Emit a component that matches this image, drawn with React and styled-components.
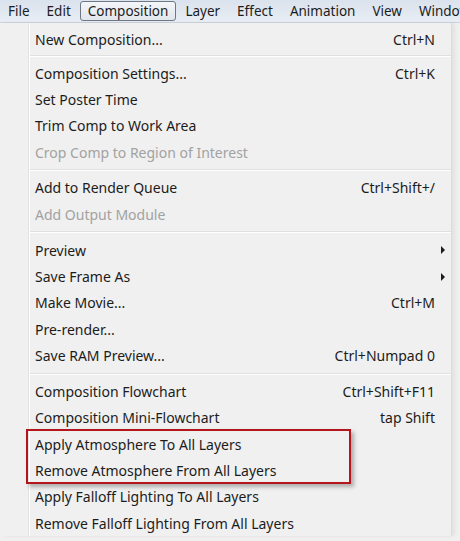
import React from "react";
import styled, { createGlobalStyle } from "styled-components";

const GlobalStyle = createGlobalStyle`
  html, body {
    margin: 0;
    padding: 0;
    background: #f0f0f0;
    overflow: hidden;
  }
  body {
    font-family: "Noto Sans", "Open Sans", sans-serif;
  }
`;

const Window = styled.div`
  width: 460px;
  height: 541px;
  overflow: hidden;
  background: #f0f0f0;
`;

const MenuBar = styled.div`
  height: 22px;
  display: flex;
  align-items: center;
  gap: 1px;
  padding-left: 0;
  background: linear-gradient(#dae2ed, #e9eef5);
  border-bottom: 1px solid #cdd3dc;
  white-space: nowrap;
  overflow: hidden;
`;

const BarItem = styled.div`
  height: 20px;
  display: flex;
  align-items: center;
  padding: 0 7px;
  font-size: 13.5px;
  color: #1c1c1c;
  box-sizing: border-box;
  border: 1px solid ${(p) => (p.$open ? "#6f7885" : "transparent")};
  border-radius: 3px;
  background: ${(p) =>
    p.$open ? "linear-gradient(#f3f5f8, #e2e6ec)" : "transparent"};
`;

const Panel = styled.div`
  width: 452px;
  padding-top: 3px;
  box-sizing: border-box;
  background: linear-gradient(
    to right,
    #f0f0f0 0,
    #f0f0f0 28px,
    #e2e3e3 28px,
    #e2e3e3 29px,
    #ffffff 29px,
    #ffffff 30px,
    #f0f0f0 30px
  );
  border-right: 1px solid #dcdcdc;
  box-shadow: 3px 0 4px rgba(0, 0, 0, 0.06);
`;

const Row = styled.div`
  height: 26.35px;
  display: grid;
  grid-template-columns: 1fr auto 16px;
  align-items: center;
  padding-left: 35px;
  font-size: 14px;
  color: ${(p) => (p.$disabled ? "#a2a2a2" : "#1c1c1c")};
  white-space: nowrap;
`;

const Shortcut = styled.span`
  text-align: right;
`;

const Arrow = styled.span`
  justify-self: center;
  width: 0;
  height: 0;
  border-top: 4px solid transparent;
  border-bottom: 4px solid transparent;
  border-left: 4px solid #1c1c1c;
`;

const Separator = styled.div`
  height: ${(p) => p.$h || 9.6}px;
  display: flex;
  align-items: center;
  padding-left: 30px;
  &::after {
    content: "";
    flex: 1;
    height: 1px;
    background: #e0e0e0;
    border-bottom: 1px solid #ffffff;
  }
`;

const Highlight = styled.div`
  position: relative;
  &::after {
    content: "";
    position: absolute;
    left: 26px;
    top: -2px;
    width: 325px;
    height: 55px;
    box-sizing: border-box;
    border: 2px solid #b5151c;
    box-shadow: 3px 3px 4px rgba(0, 0, 0, 0.28);
    pointer-events: none;
  }
`;

const MenuRow = ({ label, shortcut, sub, disabled }) => (
  <Row $disabled={disabled}>
    <span>{label}</span>
    <Shortcut>{shortcut}</Shortcut>
    {sub ? <Arrow /> : <span />}
  </Row>
);

const topMenus = [
  "File",
  "Edit",
  "Composition",
  "Layer",
  "Effect",
  "Animation",
  "View",
  "Window",
];

export default function App() {
  return (
    <Window>
      <GlobalStyle />
      <MenuBar>
        {topMenus.map((m) => (
          <BarItem key={m} $open={m === "Composition"}>
            {m}
          </BarItem>
        ))}
      </MenuBar>
      <Panel>
        <MenuRow label="New Composition..." shortcut="Ctrl+N" />
        <Separator $h={7.5} />
        <MenuRow label="Composition Settings..." shortcut="Ctrl+K" />
        <MenuRow label="Set Poster Time" />
        <MenuRow label="Trim Comp to Work Area" />
        <MenuRow label="Crop Comp to Region of Interest" disabled />
        <Separator />
        <MenuRow label="Add to Render Queue" shortcut="Ctrl+Shift+/" />
        <MenuRow label="Add Output Module" disabled />
        <Separator />
        <MenuRow label="Preview" sub />
        <MenuRow label="Save Frame As" sub />
        <MenuRow label="Make Movie..." shortcut="Ctrl+M" />
        <MenuRow label="Pre-render..." />
        <MenuRow label="Save RAM Preview..." shortcut="Ctrl+Numpad 0" />
        <Separator />
        <MenuRow label="Composition Flowchart" shortcut="Ctrl+Shift+F11" />
        <MenuRow label="Composition Mini-Flowchart" shortcut="tap Shift" />
        <Highlight>
          <MenuRow label="Apply Atmosphere To All Layers" />
          <MenuRow label="Remove Atmosphere From All Layers" />
        </Highlight>
        <MenuRow label="Apply Falloff Lighting To All Layers" />
        <MenuRow label="Remove Falloff Lighting From All Layers" />
      </Panel>
    </Window>
  );
}
